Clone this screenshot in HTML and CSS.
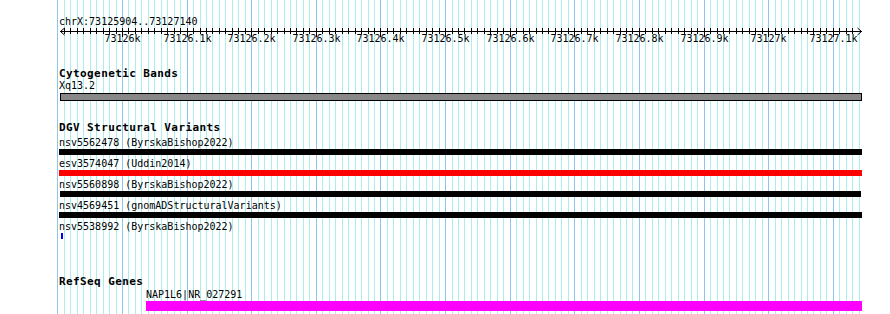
FILE: index.html
```html
<!DOCTYPE html>
<html lang="en">
<head>
    <meta charset="UTF-8">
    <meta name="viewport" content="width=device-width, initial-scale=1.0">
    <title>Genome Browser - chrX:73125904..73127140</title>
    <link rel="stylesheet" href="styles.css">
</head>
<body>
    <div class="browser">
        <!-- guidelines every 10bp, drawn by script.js -->
        <svg class="guidelines" id="guidelines" width="890" height="314"></svg>

        <div class="tracks">
            <div class="position">chrX:73125904..73127140</div>
            <svg class="ruler" id="ruler" width="890" height="18" viewBox="0 0 890 18">
                <g id="rulerTicks" stroke="#000" stroke-width="1" fill="none">
                    <line x1="60" y1="4.5" x2="862" y2="4.5"/>
                    <polyline points="64.5,1 60.5,4.5 64.5,8"/>
                    <polyline points="857.5,1 861.5,4.5 857.5,8"/>
                </g>
                <g id="rulerLabels" class="ruler-labels" text-anchor="middle"></g>
            </svg>

            <div class="track cyto-track">
                <div class="track-title">Cytogenetic Bands</div>
                <div class="feature-label">Xq13.2</div>
                <div class="band"></div>
            </div>

            <div class="track dgv-track">
                <div class="track-title">DGV Structural Variants</div>
                <div class="sv-row">
                    <div class="feature-label">nsv5562478 (ByrskaBishop2022)</div>
                    <div class="bar bar-black"></div>
                </div>
                <div class="sv-row">
                    <div class="feature-label">esv3574047 (Uddin2014)</div>
                    <div class="bar bar-red"></div>
                </div>
                <div class="sv-row">
                    <div class="feature-label">nsv5560898 (ByrskaBishop2022)</div>
                    <div class="bar bar-black bar-short"></div>
                </div>
                <div class="sv-row">
                    <div class="feature-label">nsv4569451 (gnomADStructuralVariants)</div>
                    <div class="bar bar-black"></div>
                </div>
                <div class="sv-row">
                    <div class="feature-label">nsv5538992 (ByrskaBishop2022)</div>
                    <div class="bar bar-blue"></div>
                </div>
            </div>

            <div class="track refseq-track">
                <div class="track-title">RefSeq Genes</div>
                <div class="feature-label gene-label">NAP1L6|NR_027291</div>
                <div class="gene"></div>
            </div>
        </div>
    </div>

    <script src="script.js"></script>
</body>
</html>
```

FILE: styles.css
```css
* {
    margin: 0;
    padding: 0;
    box-sizing: border-box;
}

body {
    background-color: #ffffff;
    font-family: 'DejaVu Sans Mono', 'Liberation Mono', monospace;
    font-size: 10px;
    color: #000;
}

.browser {
    position: relative;
    width: 890px;
    height: 314px;
    overflow: hidden;
}

.guidelines {
    position: absolute;
    left: 0;
    top: 0;
}

.tracks {
    position: relative;
}

.position {
    padding-top: 16px;
    padding-left: 59px;
    line-height: 11px;
}

.ruler {
    display: block;
}

.ruler-labels {
    font-family: 'DejaVu Sans Mono', monospace;
    font-size: 10px;
    fill: #000;
}

.track-title {
    padding-left: 59px;
    font-size: 11px;
    font-weight: bold;
    letter-spacing: 0.4px;
    line-height: 12px;
}

.feature-label {
    padding-left: 59px;
    line-height: 11px;
    white-space: nowrap;
}

/* cytogenetic bands */
.cyto-track {
    margin-top: 23px;
}

.band {
    margin-top: 2px;
    margin-left: 60px;
    width: 802px;
    height: 8px;
    background-color: #888888;
    border: 1px solid #000;
}

/* structural variants */
.dgv-track {
    margin-top: 21px;
}

.sv-row {
    margin-top: 3px;
}

.sv-row:first-of-type {
    margin-top: 1px;
}

.bar {
    margin-top: 1px;
    margin-left: 59px;
    width: 803px;
    height: 6px;
}

.bar-black {
    background-color: #000;
}

.bar-red {
    background-color: #ff0000;
}

.bar-short {
    margin-left: 60px;
    width: 801px;
}

.bar-blue {
    margin-left: 61px;
    width: 2px;
    background-color: #0000ee;
}

/* refseq genes */
.refseq-track {
    margin-top: 37px;
}

.gene-label {
    margin-top: 1px;
    padding-left: 146px;
}

.gene {
    margin-top: 1px;
    margin-left: 146px;
    width: 716px;
    height: 10px;
    background-color: #ff00ff;
}
```

FILE: script.js
```js
// 73126000 sits at x=122.5, one guideline every 10bp
var origin = 122.5;
var step = 6.462;
var svgNS = 'http://www.w3.org/2000/svg';

function col(k) {
    return Math.floor(origin + step * k) + 0.5;
}

function addLine(parent, x1, y1, x2, y2, color) {
    var l = document.createElementNS(svgNS, 'line');
    l.setAttribute('x1', x1);
    l.setAttribute('y1', y1);
    l.setAttribute('x2', x2);
    l.setAttribute('y2', y2);
    if (color) l.setAttribute('stroke', color);
    parent.appendChild(l);
}

var grid = document.getElementById('guidelines');
grid.setAttribute('stroke-width', '1');
for (var k = -10; k <= 114; k++) {
    var x = col(k);
    addLine(grid, x, 0, x, 314, k % 10 === 0 ? '#8cc6ee' : '#aaeeee');
}

// ruler ticks and labels
var ticks = document.getElementById('rulerTicks');
var labels = document.getElementById('rulerLabels');
for (var k = -9; k <= 113; k++) {
    var x = col(k);
    var major = k % 10 === 0;
    addLine(ticks, x, 1, x, major ? 10 : 7);

    if (major) {
        var kb = 73126 + k / 100;
        var txt = document.createElementNS(svgNS, 'text');
        txt.setAttribute('x', x);
        txt.setAttribute('y', 15);
        txt.textContent = (k % 100 === 0 ? String(kb) : kb.toFixed(1)) + 'k';
        labels.appendChild(txt);
    }
}
```
